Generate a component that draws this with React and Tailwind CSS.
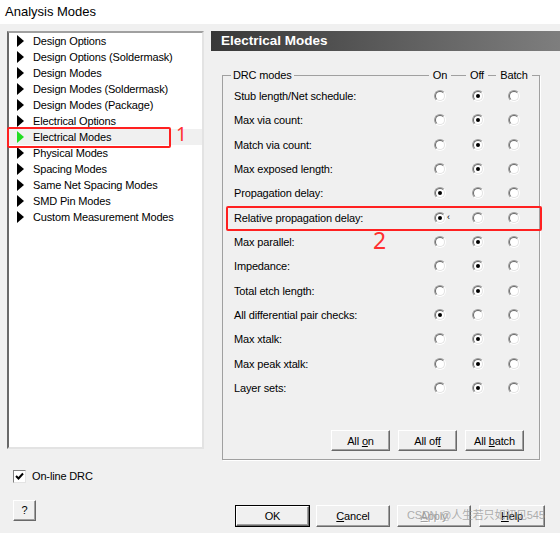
import React from "react";

const listItems = [
  "Design Options",
  "Design Options (Soldermask)",
  "Design Modes",
  "Design Modes (Soldermask)",
  "Design Modes (Package)",
  "Electrical Options",
  "Electrical Modes",
  "Physical Modes",
  "Spacing Modes",
  "Same Net Spacing Modes",
  "SMD Pin Modes",
  "Custom Measurement Modes",
];

const rows = [
  ["Stub length/Net schedule:", 1],
  ["Max via count:", 1],
  ["Match via count:", 1],
  ["Max exposed length:", 1],
  ["Propagation delay:", 0],
  ["Relative propagation delay:", 0, true],
  ["Max parallel:", 1],
  ["Impedance:", 1],
  ["Total etch length:", 1],
  ["All differential pair checks:", 0],
  ["Max xtalk:", 1],
  ["Max peak xtalk:", 1],
  ["Layer sets:", 1],
];

function Triangle({ green }) {
  return (
    <svg width="8" height="12" viewBox="0 0 8 12" className="shrink-0">
      <polygon points="0,0 7,6 0,12" fill={green ? "#22dd22" : "#000"} />
    </svg>
  );
}

function Radio({ on }) {
  return (
    <div className="w-[12px] h-[12px] rounded-full border border-t-[#a0a0a0] border-l-[#a0a0a0] border-r-white border-b-white">
      <div className="w-full h-full rounded-full border border-t-[#696969] border-l-[#696969] border-r-[#e3e3e3] border-b-[#e3e3e3] bg-white flex items-center justify-center">
        {on && <div className="w-[4px] h-[4px] rounded-full bg-black" />}
      </div>
    </div>
  );
}

function Btn({ children, className = "", isDefault = false, disabled = false }) {
  const inner = (
    <div
      className={
        "h-full w-full flex items-center justify-center bg-[#f0f0f0] border border-t-white border-l-white border-r-[#696969] border-b-[#696969] shadow-[inset_-1px_-1px_0_#a0a0a0] " +
        (disabled ? "text-[#a0a0a0] [text-shadow:1px_1px_0_#fff]" : "text-black")
      }
    >
      {children}
    </div>
  );
  return (
    <div className={(isDefault ? "border border-black " : "") + className}>{inner}</div>
  );
}

export default function App() {
  return (
    <div className="w-[560px] h-[533px] bg-[#f0f0f0] relative overflow-hidden font-['Liberation_Sans',Arial,sans-serif] text-[11px] tracking-[-0.15px] text-black">
      <div className="h-[24px] bg-white flex items-center pl-[5px] text-[13px] tracking-normal">
        Analysis Modes
      </div>
      <div className="flex">
        {/* Left column */}
        <div className="w-[211px] pl-[7px] pt-[7px] flex flex-col">
          <div className="w-[197px] h-[418px] bg-white border-2 border-t-[#a0a0a0] border-l-[#696969] border-r-[#e3e3e3] border-b-[#e3e3e3] flex flex-col">
            {listItems.map((t, i) => (
              <div
                key={t}
                className={
                  "h-[16px] flex items-center pl-[8px] gap-[8px] " +
                  (i === 6 ? "bg-[#f0f0f0]" : "")
                }
              >
                <Triangle green={i === 6} />
                <span>{t}</span>
              </div>
            ))}
          </div>
          <div className="mt-[20px] ml-[6px] flex items-center gap-[6px] h-[14px]">
            <div className="w-[13px] h-[13px] bg-white border border-t-[#808080] border-l-[#808080] border-r-[#e3e3e3] border-b-[#e3e3e3] flex items-center justify-center">
              <svg width="9" height="9" viewBox="0 0 9 9">
                <path d="M1 4 L3.5 6.5 L8 1.5" stroke="#000" strokeWidth="2" fill="none" />
              </svg>
            </div>
            <span>On-line DRC</span>
          </div>
          <Btn className="mt-[17px] ml-[6px] w-[23px] h-[21px]">?</Btn>
        </div>

        {/* Right column */}
        <div className="flex-1 pt-[7px] flex flex-col">
          <div className="h-[20px] bg-[linear-gradient(to_right,#383838,#7e7e7e)] flex items-center pl-[10px] text-white font-bold text-[13.5px] tracking-normal">
            Electrical Modes
          </div>
          <div className="ml-[11px] mt-[24px] w-[318px] h-[385px] border border-[#a0a0a0] shadow-[1px_1px_0_#fff] flex flex-col">
            <div className="-mt-[9px] h-[16px] grid grid-cols-[198px_38px_38px_34px] items-center">
              <div className="pl-[8px]">
                <span className="bg-[#f0f0f0] px-[2px]">DRC modes</span>
              </div>
              <div className="flex justify-center">
                <span className="bg-[#f0f0f0] px-[4px]">On</span>
              </div>
              <div className="flex justify-center -ml-[2px]">
                <span className="bg-[#f0f0f0] px-[4px]">Off</span>
              </div>
              <div className="flex justify-center">
                <span className="bg-[#f0f0f0] px-[4px]">Batch</span>
              </div>
            </div>
            <div className="mt-[1px] flex flex-col">
              {rows.map(([label, sel, mark]) => (
                <div
                  key={label}
                  className="h-[24.33px] grid grid-cols-[198px_38px_38px_34px] items-center"
                >
                  <div className="pl-[11px]">{label}</div>
                  {[0, 1, 2].map((c) => (
                    <div key={c} className="flex justify-center relative">
                      <Radio on={sel === c} />
                      {mark && c === 0 && (
                        <span className="absolute left-[26px] -top-[1px] text-[9px]">‹</span>
                      )}
                    </div>
                  ))}
                </div>
              ))}
            </div>
            <div className="mt-[30px] flex justify-end gap-[8px] pr-[15px]">
              <Btn className="w-[59px] h-[21px]">
                <span>
                  All <u>o</u>n
                </span>
              </Btn>
              <Btn className="w-[59px] h-[21px]">
                <span>
                  All of<u>f</u>
                </span>
              </Btn>
              <Btn className="w-[59px] h-[21px]">
                <span>
                  All <u>b</u>atch
                </span>
              </Btn>
            </div>
          </div>
          <div className="mt-[45px] ml-[24px] flex items-center">
            <Btn isDefault className="w-[75px] h-[22px]">OK</Btn>
            <Btn className="ml-[6px] w-[74px] h-[22px]">
              <span>
                <u>C</u>ancel
              </span>
            </Btn>
            <Btn disabled className="ml-[7px] w-[74px] h-[22px]">
              <span>
                <u>A</u>pply
              </span>
            </Btn>
            <Btn className="ml-[8px] w-[66px] h-[22px]">
              <span>
                <u>H</u>elp
              </span>
            </Btn>
          </div>
        </div>
      </div>

      {/* Annotations overlaid */}
      <div className="absolute left-[7px] top-[127px] w-[164px] h-[21px] border-2 border-[#ff2020] rounded-[2px]" />
      <div className="absolute left-[176px] top-[125px] text-[19px] leading-none text-[#ff3030] font-['Noto_Sans',sans-serif] tracking-normal">
        1
      </div>
      <div className="absolute left-[226px] top-[206px] w-[316px] h-[25px] border-2 border-[#ff2020] rounded-[2px]" />
      <div className="absolute left-[373px] top-[229px] text-[23px] leading-none text-[#ff3030] font-['Noto_Sans',sans-serif] tracking-normal">
        2
      </div>
      <div className="absolute left-[407px] top-[510px] text-[11px] leading-none text-[#9a9a9a]/80 tracking-[-0.2px] font-['Liberation_Sans','Noto_Sans_CJK_SC',sans-serif] whitespace-nowrap">
        CSDN @人生若只如初见545
      </div>
    </div>
  );
}
